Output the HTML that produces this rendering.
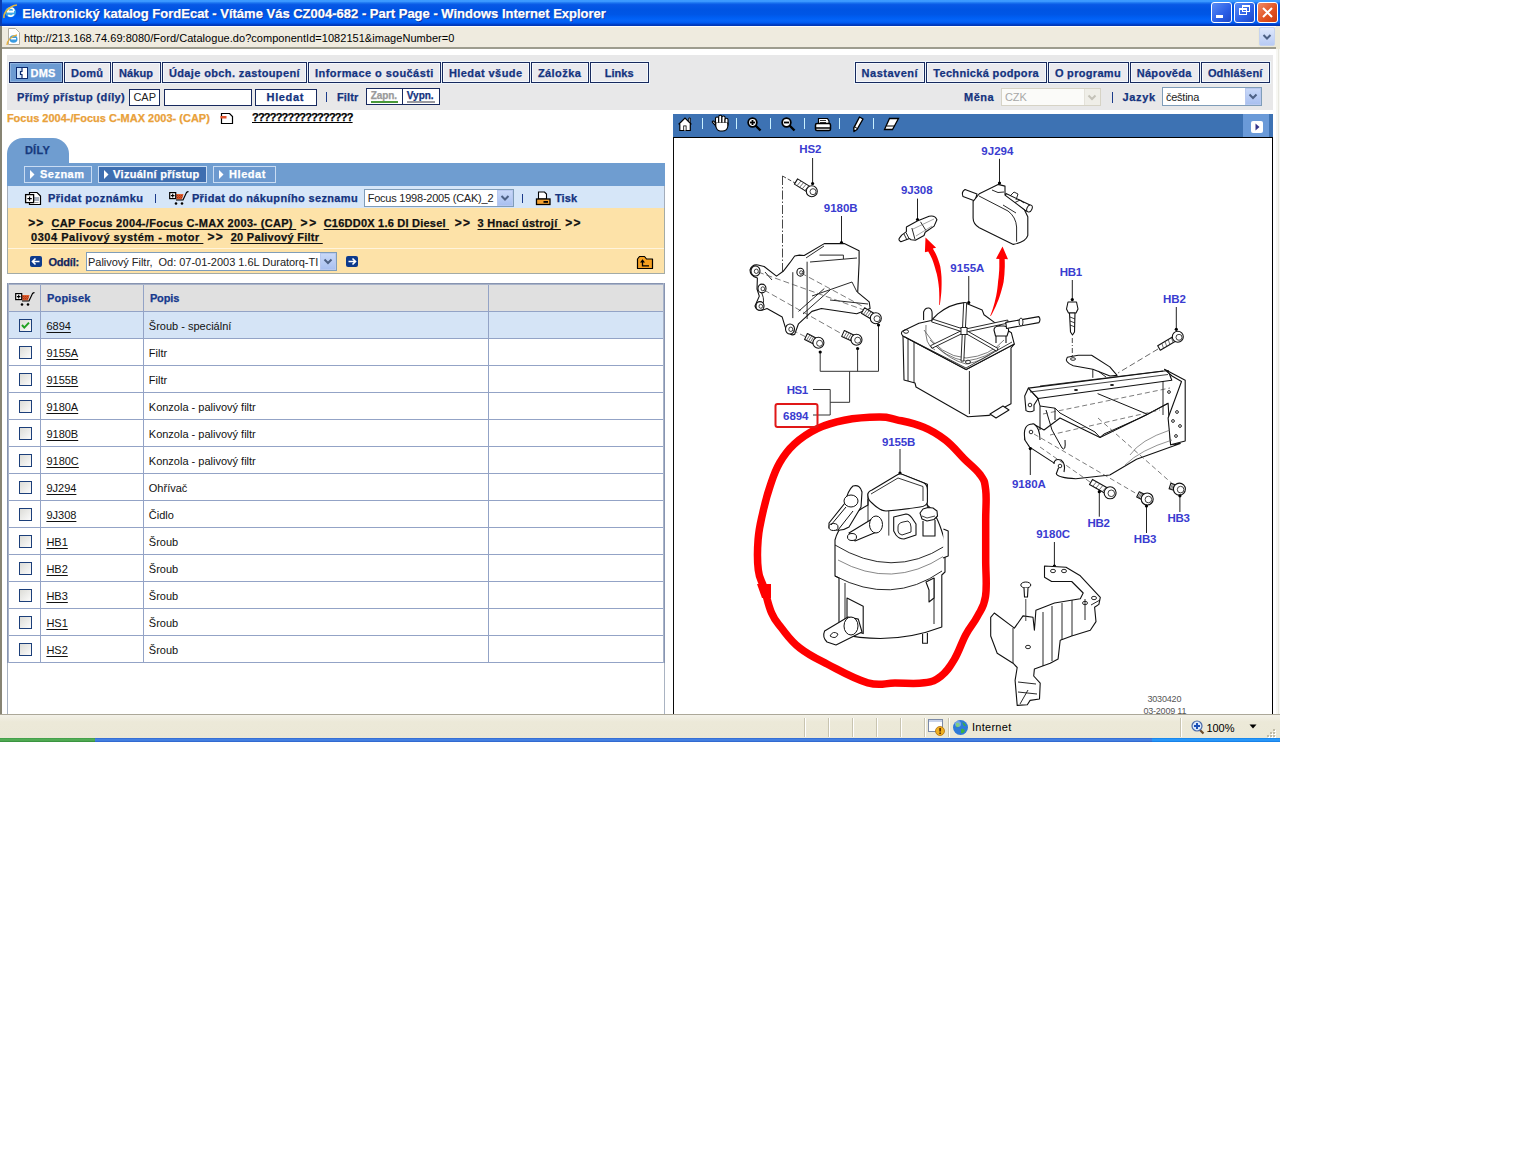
<!DOCTYPE html>
<html><head><meta charset="utf-8">
<style>
*{margin:0;padding:0;box-sizing:border-box}
html,body{width:1536px;height:1152px;background:#fff;overflow:hidden;font-family:"Liberation Sans",sans-serif}
.a{position:absolute}
.t{position:absolute;white-space:nowrap;line-height:1}
svg{position:absolute;overflow:hidden}
</style></head><body>
<div class="a" style="left:0px;top:0px;width:1280px;height:26px;background:linear-gradient(#3d9cff 0%,#3a96ff 6%,#1a74f0 11%,#0858e6 18%,#0054e3 35%,#0056e6 55%,#0060f5 70%,#0664f8 80%,#005af0 88%,#0040c8 94%,#0034b0 100%)"></div>
<div class="a" style="left:0px;top:0px;width:2px;height:26px;background:#0a3cb0"></div>
<svg style="left:2px;top:2px" width="16" height="17" viewBox="0 0 16 17"><ellipse cx="8.5" cy="10" rx="5.5" ry="5.3" fill="#3ca9ea"/><rect x="5" y="8.6" width="7" height="2" fill="#fff"/><path d="M6 9 a3 3 0 0 1 6 0" fill="none" stroke="#fff" stroke-width="1.6"/><path d="M11.7 12.3 a3.4 3.4 0 0 1 -5.5 0.8" fill="none" stroke="#fff" stroke-width="1.6"/><path d="M2 16 C1 11 7 4 15 3" fill="none" stroke="#e0b840" stroke-width="1.6"/></svg>
<div class="t" style="left:22.30px;top:7.00px;font-size:13px;color:#fff;font-weight:bold;-webkit-text-stroke:0.25px;text-shadow:1px 1px 0 #0b2f9a;">Elektronický katalog FordEcat - Vítáme Vás CZ004-682 - Part Page - Windows Internet Explorer</div>
<div class="a" style="left:1211px;top:2px;width:21px;height:21px;border:1px solid #fff;border-radius:3px;background:linear-gradient(135deg,#5a8cf5,#2a5ee6 60%,#1d48c8)"></div>
<div class="a" style="left:1234px;top:2px;width:21px;height:21px;border:1px solid #fff;border-radius:3px;background:linear-gradient(135deg,#5a8cf5,#2a5ee6 60%,#1d48c8)"></div>
<div class="a" style="left:1257px;top:2px;width:21px;height:21px;border:1px solid #fff;border-radius:3px;background:linear-gradient(135deg,#f08a66,#e0501e 60%,#c83c10)"></div>
<div class="a" style="left:1216px;top:15px;width:7px;height:3px;background:#fff"></div>
<div class="a" style="left:1239px;top:8px;width:8px;height:7px;border:1px solid #fff;border-top-width:2px"></div>
<div class="a" style="left:1242px;top:5px;width:8px;height:7px;border:1px solid #fff;border-top-width:2px"></div>
<svg style="left:1257px;top:2px" width="21" height="21" viewBox="0 0 21 21"><path d="M6 6 L15 15 M15 6 L6 15" stroke="#fff" stroke-width="2"/></svg>
<div class="a" style="left:0px;top:26px;width:1280px;height:23px;background:#ece9d8"></div>
<div class="a" style="left:2px;top:26px;width:1274px;height:1px;background:#fdfdfb"></div>
<div class="a" style="left:2px;top:27px;width:1256px;height:20px;background:#efebdf"></div>
<div class="a" style="left:0px;top:47px;width:1276px;height:2px;background:#9d9c8e"></div>
<div class="a" style="left:1259px;top:27px;width:16px;height:19px;background:linear-gradient(#dfe8fb,#b8cbf5);border:1px solid #c6d3ef;border-radius:2px"></div>
<svg style="left:1259px;top:27px" width="16" height="19" viewBox="0 0 16 19"><path d="M4.5 8 L8 11.5 L11.5 8" fill="none" stroke="#4d6185" stroke-width="2"/></svg>
<svg style="left:5px;top:28px" width="16" height="18" viewBox="0 0 16 18"><path d="M3.5 0.5 H10.5 L14.5 4.5 V16.5 H3.5 Z" fill="#fff" stroke="#b0aca0"/><ellipse cx="8.5" cy="11" rx="4" ry="3.8" fill="#3a9be0"/><rect x="6" y="10" width="5" height="1.5" fill="#fff"/><path d="M2 17 C2 13 6 8 12 7" fill="none" stroke="#e5b040" stroke-width="1.3"/></svg>
<div class="t" style="left:23.90px;top:32.69px;font-size:11px;color:#000;letter-spacing:0.039px;">http://213.168.74.69:8080/Ford/Catalogue.do?componentId=1082151&amp;imageNumber=0</div>
<div class="a" style="left:0px;top:26px;width:2px;height:716px;background:#878473"></div>
<div class="a" style="left:2px;top:49px;width:1274px;height:665px;background:#fff"></div>
<div class="a" style="left:1276px;top:49px;width:4px;height:665px;background:#f7f7f3"></div>
<div class="a" style="left:1278px;top:49px;width:1px;height:665px;background:#e8e8e0"></div>
<div class="a" style="left:7px;top:55px;width:1266px;height:55px;background:#e8e8e9"></div>
<div class="a" style="left:9px;top:62px;width:54px;height:21px;border:1px solid #17295e;background:#6c9bd2;box-shadow:inset 0 0 0 1px #8fb4e0,0 0 0 1px #eef5fb"></div>
<div class="t" style="left:30.60px;top:67.69px;font-size:11px;color:#fff;font-weight:bold;-webkit-text-stroke:0.25px;letter-spacing:0.142px;">DMS</div>
<svg style="left:16px;top:67px" width="12" height="12" viewBox="0 0 12 12"><rect x="0.5" y="0.5" width="11" height="11" fill="#fff" stroke="#0a2a70"/><rect x="1" y="1" width="4.5" height="10" fill="#cfe4fb"/><path d="M6 0.5 V4.5 H4.5 V7.5 H6 V11.5" fill="none" stroke="#0a2a70" stroke-width="1.2"/></svg>
<div class="a" style="left:64px;top:62px;width:47px;height:21px;border:1px solid #17295e;background:#eaeaee;box-shadow:inset 0 0 0 1px #f4f8fd,0 0 0 1px #eef5fb"></div>
<div class="t" style="left:71.00px;top:67.69px;font-size:11px;color:#14337e;font-weight:bold;-webkit-text-stroke:0.25px;letter-spacing:0.296px;">Domů</div>
<div class="a" style="left:112px;top:62px;width:49px;height:21px;border:1px solid #17295e;background:#eaeaee;box-shadow:inset 0 0 0 1px #f4f8fd,0 0 0 1px #eef5fb"></div>
<div class="t" style="left:118.90px;top:67.69px;font-size:11px;color:#14337e;font-weight:bold;-webkit-text-stroke:0.25px;letter-spacing:0.107px;">Nákup</div>
<div class="a" style="left:162px;top:62px;width:145px;height:21px;border:1px solid #17295e;background:#eaeaee;box-shadow:inset 0 0 0 1px #f4f8fd,0 0 0 1px #eef5fb"></div>
<div class="t" style="left:168.90px;top:67.69px;font-size:11px;color:#14337e;font-weight:bold;-webkit-text-stroke:0.25px;letter-spacing:0.374px;">Údaje obch. zastoupení</div>
<div class="a" style="left:308px;top:62px;width:133px;height:21px;border:1px solid #17295e;background:#eaeaee;box-shadow:inset 0 0 0 1px #f4f8fd,0 0 0 1px #eef5fb"></div>
<div class="t" style="left:315.00px;top:67.69px;font-size:11px;color:#14337e;font-weight:bold;-webkit-text-stroke:0.25px;letter-spacing:0.439px;">Informace o součásti</div>
<div class="a" style="left:442px;top:62px;width:88px;height:21px;border:1px solid #17295e;background:#eaeaee;box-shadow:inset 0 0 0 1px #f4f8fd,0 0 0 1px #eef5fb"></div>
<div class="t" style="left:448.90px;top:67.69px;font-size:11px;color:#14337e;font-weight:bold;-webkit-text-stroke:0.25px;letter-spacing:0.429px;">Hledat všude</div>
<div class="a" style="left:531px;top:62px;width:58px;height:21px;border:1px solid #17295e;background:#eaeaee;box-shadow:inset 0 0 0 1px #f4f8fd,0 0 0 1px #eef5fb"></div>
<div class="t" style="left:537.90px;top:67.69px;font-size:11px;color:#14337e;font-weight:bold;-webkit-text-stroke:0.25px;letter-spacing:0.439px;">Záložka</div>
<div class="a" style="left:590px;top:62px;width:59px;height:21px;border:1px solid #17295e;background:#eaeaee;box-shadow:inset 0 0 0 1px #f4f8fd,0 0 0 1px #eef5fb"></div>
<div class="t" style="left:604.80px;top:67.69px;font-size:11px;color:#14337e;font-weight:bold;-webkit-text-stroke:0.25px;letter-spacing:0.015px;">Links</div>
<div class="a" style="left:855px;top:62px;width:70px;height:21px;border:1px solid #17295e;background:#eaeaee;box-shadow:inset 0 0 0 1px #f4f8fd,0 0 0 1px #eef5fb"></div>
<div class="t" style="left:861.60px;top:67.69px;font-size:11px;color:#14337e;font-weight:bold;-webkit-text-stroke:0.25px;letter-spacing:0.509px;">Nastavení</div>
<div class="a" style="left:926px;top:62px;width:121px;height:21px;border:1px solid #17295e;background:#eaeaee;box-shadow:inset 0 0 0 1px #f4f8fd,0 0 0 1px #eef5fb"></div>
<div class="t" style="left:933.20px;top:67.69px;font-size:11px;color:#14337e;font-weight:bold;-webkit-text-stroke:0.25px;letter-spacing:0.337px;">Technická podpora</div>
<div class="a" style="left:1048px;top:62px;width:81px;height:21px;border:1px solid #17295e;background:#eaeaee;box-shadow:inset 0 0 0 1px #f4f8fd,0 0 0 1px #eef5fb"></div>
<div class="t" style="left:1054.90px;top:67.69px;font-size:11px;color:#14337e;font-weight:bold;-webkit-text-stroke:0.25px;letter-spacing:0.311px;">O programu</div>
<div class="a" style="left:1130px;top:62px;width:70px;height:21px;border:1px solid #17295e;background:#eaeaee;box-shadow:inset 0 0 0 1px #f4f8fd,0 0 0 1px #eef5fb"></div>
<div class="t" style="left:1136.70px;top:67.69px;font-size:11px;color:#14337e;font-weight:bold;-webkit-text-stroke:0.25px;letter-spacing:0.310px;">Nápověda</div>
<div class="a" style="left:1201px;top:62px;width:69px;height:21px;border:1px solid #17295e;background:#eaeaee;box-shadow:inset 0 0 0 1px #f4f8fd,0 0 0 1px #eef5fb"></div>
<div class="t" style="left:1207.90px;top:67.69px;font-size:11px;color:#14337e;font-weight:bold;-webkit-text-stroke:0.25px;letter-spacing:0.155px;">Odhlášení</div>
<div class="t" style="left:16.90px;top:92.19px;font-size:11px;color:#14337e;font-weight:bold;-webkit-text-stroke:0.25px;letter-spacing:0.403px;">Přímý přístup (díly)</div>
<div class="a" style="left:129px;top:89px;width:31px;height:17px;background:#fff;border:1px solid #17295e"></div>
<div class="t" style="left:133.40px;top:92.49px;font-size:11px;color:#222;">CAP</div>
<div class="a" style="left:164px;top:89px;width:88px;height:17px;background:#fff;border:1px solid #17295e"></div>
<div class="a" style="left:255px;top:89px;width:62px;height:17px;background:#fff;border:1px solid #17295e"></div>
<div class="t" style="left:266.60px;top:91.69px;font-size:11px;color:#14337e;font-weight:bold;-webkit-text-stroke:0.25px;letter-spacing:0.633px;">Hledat</div>
<div class="a" style="left:326px;top:92px;width:1px;height:10px;background:#1b3b8b"></div>
<div class="t" style="left:336.90px;top:92.49px;font-size:11px;color:#14337e;font-weight:bold;-webkit-text-stroke:0.25px;letter-spacing:0.161px;">Filtr</div>
<div class="a" style="left:366px;top:88px;width:74px;height:17px;background:#fff;border:1px solid #17295e"></div>
<div class="a" style="left:402px;top:88px;width:1px;height:17px;background:#17295e"></div>
<div class="t" style="left:370.70px;top:90.53px;font-size:10px;color:#9a9a9a;font-weight:bold;-webkit-text-stroke:0.25px;letter-spacing:-0.059px;">Zapn.</div>
<div class="a" style="left:371px;top:101px;width:27px;height:2px;background:#4a9a3a"></div>
<div class="t" style="left:406.80px;top:90.53px;font-size:10px;color:#14337e;font-weight:bold;-webkit-text-stroke:0.25px;letter-spacing:-0.012px;">Vypn.</div>
<div class="a" style="left:407px;top:101px;width:28px;height:2px;background:#9a9aa0"></div>
<div class="t" style="left:964.00px;top:92.29px;font-size:11px;color:#14337e;font-weight:bold;-webkit-text-stroke:0.25px;letter-spacing:0.480px;">Měna</div>
<div class="a" style="left:1001px;top:88px;width:100px;height:18px;background:#fbfbf9;border:1px solid #d6d3c6"></div>
<div class="a" style="left:1084px;top:89px;width:16px;height:16px;background:#efeee8;border-left:1px solid #e4e2da"></div>
<svg style="left:1084px;top:89px" width="16" height="16" viewBox="0 0 16 16"><path d="M4.5 6.5 L8 10 L11.5 6.5" fill="none" stroke="#c4c2b8" stroke-width="2"/></svg>
<div class="t" style="left:1004.90px;top:92.19px;font-size:11px;color:#a8a8a8;">CZK</div>
<div class="a" style="left:1112px;top:92px;width:1px;height:11px;background:#1b3b8b"></div>
<div class="t" style="left:1122.40px;top:92.49px;font-size:11px;color:#14337e;font-weight:bold;-webkit-text-stroke:0.25px;letter-spacing:0.673px;">Jazyk</div>
<div class="a" style="left:1162px;top:87px;width:100px;height:19px;background:#fff;border:1px solid #7f9db9"></div>
<div class="a" style="left:1245px;top:88px;width:16px;height:17px;background:linear-gradient(#c8d8f8,#a9c0f0);border:1px solid #b8c8ef"></div>
<svg style="left:1245px;top:88px" width="16" height="17" viewBox="0 0 16 17"><path d="M4.5 6.5 L8 10 L11.5 6.5" fill="none" stroke="#4d6185" stroke-width="2"/></svg>
<div class="t" style="left:1166.00px;top:92.19px;font-size:11px;color:#222;letter-spacing:-0.254px;">čeština</div>
<div class="t" style="left:6.90px;top:112.59px;font-size:11px;color:#e9a13a;font-weight:bold;-webkit-text-stroke:0.25px;">Focus 2004-/Focus C-MAX 2003- (CAP)</div>
<svg style="left:220px;top:113px" width="15" height="12" viewBox="0 0 15 12"><path d="M1.5 0.5 H9.5 L12.5 3.5 V10.5 H1.5 Z" fill="#fff" stroke="#000" stroke-width="1.2"/><rect x="0.5" y="3" width="6" height="2.5" fill="#e2522a"/></svg>
<div class="t" style="left:252.00px;top:112.19px;font-size:11px;color:#000;font-weight:bold;-webkit-text-stroke:0.25px;letter-spacing:-0.802px;text-decoration:underline;text-underline-offset:1px;">?????????????????</div>
<div class="a" style="left:7px;top:138px;width:62px;height:30px;background:#6f9dd0;border-radius:16px 16px 0 0"></div>
<div class="t" style="left:24.90px;top:145.39px;font-size:11px;color:#173a7e;font-weight:bold;-webkit-text-stroke:0.25px;letter-spacing:0.272px;">DÍLY</div>
<div class="a" style="left:7px;top:163px;width:658px;height:23px;background:#6f9dd0"></div>
<div class="a" style="left:24px;top:166px;width:68px;height:17px;border:1px solid #c9dcf3;background:#6c99cf"></div>
<svg style="left:30px;top:170px" width="5" height="9" viewBox="0 0 5 9"><path d="M0 0 L4.5 4.5 L0 9Z" fill="#fff"/></svg>
<div class="t" style="left:40.00px;top:169.09px;font-size:11px;color:#fff;font-weight:bold;-webkit-text-stroke:0.25px;letter-spacing:0.478px;">Seznam</div>
<div class="a" style="left:98px;top:166px;width:109px;height:17px;border:1px solid #c9dcf3;background:#3e6eb0"></div>
<svg style="left:104px;top:170px" width="5" height="9" viewBox="0 0 5 9"><path d="M0 0 L4.5 4.5 L0 9Z" fill="#fff"/></svg>
<div class="t" style="left:113.10px;top:169.09px;font-size:11px;color:#fff;font-weight:bold;-webkit-text-stroke:0.25px;letter-spacing:0.297px;">Vizuální přístup</div>
<div class="a" style="left:213px;top:166px;width:63px;height:17px;border:1px solid #c9dcf3;background:#6c99cf"></div>
<svg style="left:219px;top:170px" width="5" height="9" viewBox="0 0 5 9"><path d="M0 0 L4.5 4.5 L0 9Z" fill="#fff"/></svg>
<div class="t" style="left:229.10px;top:169.09px;font-size:11px;color:#fff;font-weight:bold;-webkit-text-stroke:0.25px;letter-spacing:0.524px;">Hledat</div>
<div class="a" style="left:7px;top:186px;width:658px;height:22px;background:#d6e6f8"></div>
<div class="a" style="left:7px;top:186px;width:1px;height:88px;background:#a3adbb"></div>
<div class="a" style="left:664px;top:186px;width:1px;height:88px;background:#a3adbb"></div>
<svg style="left:24px;top:191px" width="19" height="16" viewBox="0 0 19 16"><path d="M5.5 1.5 H13 L16.5 5 V13.5 H5.5Z" fill="#fff" stroke="#000" stroke-width="1.2"/><rect x="10" y="6" width="5" height="4" fill="#a8b0bc"/><rect x="10.5" y="11" width="4" height="1" fill="#a0a0a0"/><rect x="1.6" y="3.6" width="8" height="8" fill="#fff" stroke="#000" stroke-width="1.3"/><path d="M5.6 5.4 V9.8 M3.4 7.6 H7.8" stroke="#000" stroke-width="1.1"/></svg>
<div class="t" style="left:47.90px;top:193.39px;font-size:11px;color:#14337e;font-weight:bold;-webkit-text-stroke:0.25px;letter-spacing:0.460px;">Přidat poznámku</div>
<div class="a" style="left:155px;top:194px;width:1px;height:9px;background:#1b3b8b"></div>
<svg style="left:168px;top:190px" width="22" height="16" viewBox="0 0 22 16"><path d="M8 4 H15.5 L14 9.5 H8.5Z" fill="#e06030"/><path d="M9.5 5 V9 M11.5 5 V9 M13.5 5 V9 M8.3 6.2 H15 M8.5 8 H14.5" stroke="#8a1a00" stroke-width="0.7" stroke-dasharray="0.8 1.2"/><rect x="1.7" y="2.6" width="6" height="6" fill="#fff" stroke="#000" stroke-width="1.2"/><path d="M4.7 3.8 V7.4 M2.9 5.6 H6.5" stroke="#000" stroke-width="1.1"/><path d="M8 10 H15 L18.5 2.5 Q19.5 1.5 20.5 1.6" fill="none" stroke="#000" stroke-width="1.2"/><circle cx="8" cy="13.5" r="1.3" fill="#000"/><circle cx="14" cy="13.5" r="1.3" fill="#000"/></svg>
<div class="t" style="left:191.90px;top:193.39px;font-size:11px;color:#14337e;font-weight:bold;-webkit-text-stroke:0.25px;letter-spacing:0.360px;">Přidat do nákupního seznamu</div>
<div class="a" style="left:364px;top:189px;width:150px;height:18px;background:#fff;border:1px solid #7f9db9"></div>
<div class="a" style="left:497px;top:190px;width:16px;height:16px;background:linear-gradient(#c8d8f8,#a9c0f0);border:1px solid #b8c8ef"></div>
<svg style="left:497px;top:190px" width="16" height="16" viewBox="0 0 16 16"><path d="M4.5 6 L8 9.5 L11.5 6" fill="none" stroke="#4d6185" stroke-width="2"/></svg>
<div class="t" style="left:367.70px;top:192.69px;font-size:11px;color:#222;letter-spacing:-0.229px;">Focus 1998-2005 (CAK)_2</div>
<div class="a" style="left:522px;top:194px;width:1px;height:9px;background:#1b3b8b"></div>
<svg style="left:535px;top:190px" width="17" height="16" viewBox="0 0 17 16"><path d="M3.5 2 H9.5 L11.5 4 V9 H3.5Z" fill="#fff" stroke="#000" stroke-width="1.1"/><rect x="1.5" y="9" width="13.5" height="5.5" fill="#f2a030" stroke="#000" stroke-width="1.3"/><rect x="8.5" y="11" width="4.5" height="1.8" fill="#000"/></svg>
<div class="t" style="left:554.90px;top:193.39px;font-size:11px;color:#14337e;font-weight:bold;-webkit-text-stroke:0.25px;letter-spacing:0.139px;">Tisk</div>
<div class="a" style="left:7px;top:208px;width:658px;height:66px;background:#fde2a8;border:1px solid #a3aba6;border-top:none"></div>
<div class="a" style="left:8px;top:248px;width:656px;height:1px;background:#fff4dc"></div>
<div class="t" style="left:28.20px;top:217.24px;font-size:12px;color:#111;font-weight:bold;-webkit-text-stroke:0.25px;letter-spacing:0.990px;">&gt;&gt;</div>
<div class="t" style="left:51.40px;top:218.09px;font-size:11px;color:#111;font-weight:bold;-webkit-text-stroke:0.25px;letter-spacing:0.319px;text-decoration:underline;white-space:pre;text-underline-offset:1.5px;">CAP Focus 2004-/Focus C-MAX 2003- (CAP) </div>
<div class="t" style="left:300.40px;top:217.24px;font-size:12px;color:#111;font-weight:bold;-webkit-text-stroke:0.25px;letter-spacing:1.790px;">&gt;&gt;</div>
<div class="t" style="left:323.70px;top:218.09px;font-size:11px;color:#111;font-weight:bold;-webkit-text-stroke:0.25px;letter-spacing:0.226px;text-decoration:underline;white-space:pre;text-underline-offset:1.5px;">C16DD0X 1.6 DI Diesel </div>
<div class="t" style="left:454.70px;top:217.24px;font-size:12px;color:#111;font-weight:bold;-webkit-text-stroke:0.25px;letter-spacing:1.323px;">&gt;&gt;</div>
<div class="t" style="left:477.50px;top:218.09px;font-size:11px;color:#111;font-weight:bold;-webkit-text-stroke:0.25px;letter-spacing:0.280px;text-decoration:underline;white-space:pre;text-underline-offset:1.5px;">3 Hnací ústrojí </div>
<div class="t" style="left:565.20px;top:217.24px;font-size:12px;color:#111;font-weight:bold;-webkit-text-stroke:0.25px;letter-spacing:1.323px;">&gt;&gt;</div>
<div class="t" style="left:31.10px;top:232.09px;font-size:11px;color:#111;font-weight:bold;-webkit-text-stroke:0.25px;letter-spacing:0.522px;text-decoration:underline;white-space:pre;text-underline-offset:1.5px;">0304 Palivový systém - motor </div>
<div class="t" style="left:207.40px;top:231.24px;font-size:12px;color:#111;font-weight:bold;-webkit-text-stroke:0.25px;letter-spacing:1.323px;">&gt;&gt;</div>
<div class="t" style="left:230.70px;top:232.09px;font-size:11px;color:#111;font-weight:bold;-webkit-text-stroke:0.25px;letter-spacing:0.290px;text-decoration:underline;white-space:pre;text-underline-offset:1.5px;">20 Palivový Filtr </div>
<div class="a" style="left:30px;top:256px;width:12px;height:11px;background:#0d3a8c;border-radius:2px"></div>
<svg style="left:30px;top:256px" width="12" height="11" viewBox="0 0 12 11"><path d="M2.5 5.5 H9.5 M5.5 2.5 L2.5 5.5 L5.5 8.5" fill="none" stroke="#fff" stroke-width="1.6"/></svg>
<div class="t" style="left:48.50px;top:257.49px;font-size:11px;color:#12265e;font-weight:bold;-webkit-text-stroke:0.25px;letter-spacing:-0.213px;">Oddíl:</div>
<div class="a" style="left:86px;top:252px;width:251px;height:19px;background:#fff;border:1px solid #7f9db9"></div>
<div class="t" style="left:88.00px;top:256.69px;font-size:11px;color:#222;letter-spacing:-0.023px;white-space:pre;">Palivový Filtr,  Od: 07-01-2003 1.6L Duratorq-TI</div>
<div class="a" style="left:320px;top:253px;width:16px;height:17px;background:linear-gradient(#c8d8f8,#a9c0f0);border:1px solid #b8c8ef"></div>
<svg style="left:320px;top:253px" width="16" height="17" viewBox="0 0 16 17"><path d="M4.5 6.5 L8 10 L11.5 6.5" fill="none" stroke="#4d6185" stroke-width="2"/></svg>
<div class="a" style="left:346px;top:256px;width:12px;height:11px;background:#0d3a8c;border-radius:2px"></div>
<svg style="left:346px;top:256px" width="12" height="11" viewBox="0 0 12 11"><path d="M2.5 5.5 H9.5 M6.5 2.5 L9.5 5.5 L6.5 8.5" fill="none" stroke="#fff" stroke-width="1.6"/></svg>
<svg style="left:636px;top:255px" width="18" height="15" viewBox="0 0 18 15"><path d="M1.5 4 L3.5 1.5 H8.5 L10.5 4 H16.5 V13.5 H1.5Z" fill="#f5a020" stroke="#000" stroke-width="1.2" stroke-linejoin="round"/><path d="M6.5 6 V10.8 H13" fill="none" stroke="#000" stroke-width="1.3"/><path d="M4 7.5 L6.5 4.3 L9 7.5Z" fill="#000"/></svg>
<div class="a" style="left:7px;top:283px;width:1px;height:431px;background:#a9b3c2"></div>
<div class="a" style="left:664px;top:283px;width:1px;height:431px;background:#a9b3c2"></div>
<div class="a" style="left:9px;top:285px;width:654px;height:26px;background:#e0e0e0"></div>
<div class="a" style="left:9px;top:312px;width:654px;height:26px;background:#d5e4f6"></div>
<div class="a" style="left:7px;top:283px;width:658px;height:2px;background:#a8b3c9;border-top:1px solid #8794b0"></div>
<div class="a" style="left:7px;top:283px;width:2px;height:380px;background:#a8b3c9;border-left:1px solid #8794b0"></div>
<div class="a" style="left:663px;top:283px;width:2px;height:380px;background:#a8b3c9;border-right:1px solid #8794b0"></div>
<div class="a" style="left:9px;top:311px;width:654px;height:1px;background:#93a3c6"></div>
<div class="a" style="left:9px;top:338px;width:654px;height:1px;background:#93a3c6"></div>
<div class="a" style="left:9px;top:365px;width:654px;height:1px;background:#93a3c6"></div>
<div class="a" style="left:9px;top:392px;width:654px;height:1px;background:#93a3c6"></div>
<div class="a" style="left:9px;top:419px;width:654px;height:1px;background:#93a3c6"></div>
<div class="a" style="left:9px;top:446px;width:654px;height:1px;background:#93a3c6"></div>
<div class="a" style="left:9px;top:473px;width:654px;height:1px;background:#93a3c6"></div>
<div class="a" style="left:9px;top:500px;width:654px;height:1px;background:#93a3c6"></div>
<div class="a" style="left:9px;top:527px;width:654px;height:1px;background:#93a3c6"></div>
<div class="a" style="left:9px;top:554px;width:654px;height:1px;background:#93a3c6"></div>
<div class="a" style="left:9px;top:581px;width:654px;height:1px;background:#93a3c6"></div>
<div class="a" style="left:9px;top:608px;width:654px;height:1px;background:#93a3c6"></div>
<div class="a" style="left:9px;top:635px;width:654px;height:1px;background:#93a3c6"></div>
<div class="a" style="left:9px;top:662px;width:654px;height:1px;background:#93a3c6"></div>
<div class="a" style="left:40px;top:285px;width:1px;height:377px;background:#93a3c6"></div>
<div class="a" style="left:143px;top:285px;width:1px;height:377px;background:#93a3c6"></div>
<div class="a" style="left:488px;top:285px;width:1px;height:377px;background:#93a3c6"></div>
<svg style="left:14px;top:291px" width="22" height="16" viewBox="0 0 22 16"><path d="M8 4 H15.5 L14 9.5 H8.5Z" fill="#e06030"/><path d="M9.5 5 V9 M11.5 5 V9 M13.5 5 V9 M8.3 6.2 H15 M8.5 8 H14.5" stroke="#8a1a00" stroke-width="0.7" stroke-dasharray="0.8 1.2"/><rect x="1.7" y="2.6" width="6" height="6" fill="#fff" stroke="#000" stroke-width="1.2"/><path d="M4.7 3.8 V7.4 M2.9 5.6 H6.5" stroke="#000" stroke-width="1.1"/><path d="M8 10 H15 L18.5 2.5 Q19.5 1.5 20.5 1.6" fill="none" stroke="#000" stroke-width="1.2"/><circle cx="8" cy="13.5" r="1.3" fill="#000"/><circle cx="14" cy="13.5" r="1.3" fill="#000"/></svg>
<div class="t" style="left:46.90px;top:293.39px;font-size:11px;color:#173a8e;font-weight:bold;-webkit-text-stroke:0.25px;letter-spacing:0.218px;">Popisek</div>
<div class="t" style="left:149.90px;top:293.39px;font-size:11px;color:#173a8e;font-weight:bold;-webkit-text-stroke:0.25px;letter-spacing:-0.144px;">Popis</div>
<div class="a" style="left:19px;top:319px;width:13px;height:13px;border:1px solid #1c3f7a;background:linear-gradient(135deg,#dcdcd7,#fbfbfb)"></div>
<svg style="left:19px;top:319px" width="13" height="13" viewBox="0 0 13 13"><path d="M3 6 L5.3 8.6 L10 3.6" fill="none" stroke="#21a121" stroke-width="2"/></svg>
<div class="t" style="left:46.40px;top:320.69px;font-size:11px;color:#111;text-decoration:underline;text-underline-offset:1.5px;">6894</div>
<div class="t" style="left:148.80px;top:320.69px;font-size:11px;color:#111;">Šroub - speciální</div>
<div class="a" style="left:19px;top:346px;width:13px;height:13px;border:1px solid #1c3f7a;background:linear-gradient(135deg,#dcdcd7,#fbfbfb)"></div>
<div class="t" style="left:46.40px;top:347.69px;font-size:11px;color:#111;text-decoration:underline;text-underline-offset:1.5px;">9155A</div>
<div class="t" style="left:148.80px;top:347.69px;font-size:11px;color:#111;">Filtr</div>
<div class="a" style="left:19px;top:373px;width:13px;height:13px;border:1px solid #1c3f7a;background:linear-gradient(135deg,#dcdcd7,#fbfbfb)"></div>
<div class="t" style="left:46.40px;top:374.69px;font-size:11px;color:#111;text-decoration:underline;text-underline-offset:1.5px;">9155B</div>
<div class="t" style="left:148.80px;top:374.69px;font-size:11px;color:#111;">Filtr</div>
<div class="a" style="left:19px;top:400px;width:13px;height:13px;border:1px solid #1c3f7a;background:linear-gradient(135deg,#dcdcd7,#fbfbfb)"></div>
<div class="t" style="left:46.40px;top:401.69px;font-size:11px;color:#111;text-decoration:underline;text-underline-offset:1.5px;">9180A</div>
<div class="t" style="left:148.80px;top:401.69px;font-size:11px;color:#111;">Konzola - palivový filtr</div>
<div class="a" style="left:19px;top:427px;width:13px;height:13px;border:1px solid #1c3f7a;background:linear-gradient(135deg,#dcdcd7,#fbfbfb)"></div>
<div class="t" style="left:46.40px;top:428.69px;font-size:11px;color:#111;text-decoration:underline;text-underline-offset:1.5px;">9180B</div>
<div class="t" style="left:148.80px;top:428.69px;font-size:11px;color:#111;">Konzola - palivový filtr</div>
<div class="a" style="left:19px;top:454px;width:13px;height:13px;border:1px solid #1c3f7a;background:linear-gradient(135deg,#dcdcd7,#fbfbfb)"></div>
<div class="t" style="left:46.40px;top:455.69px;font-size:11px;color:#111;text-decoration:underline;text-underline-offset:1.5px;">9180C</div>
<div class="t" style="left:148.80px;top:455.69px;font-size:11px;color:#111;">Konzola - palivový filtr</div>
<div class="a" style="left:19px;top:481px;width:13px;height:13px;border:1px solid #1c3f7a;background:linear-gradient(135deg,#dcdcd7,#fbfbfb)"></div>
<div class="t" style="left:46.40px;top:482.69px;font-size:11px;color:#111;text-decoration:underline;text-underline-offset:1.5px;">9J294</div>
<div class="t" style="left:148.80px;top:482.69px;font-size:11px;color:#111;">Ohřívač</div>
<div class="a" style="left:19px;top:508px;width:13px;height:13px;border:1px solid #1c3f7a;background:linear-gradient(135deg,#dcdcd7,#fbfbfb)"></div>
<div class="t" style="left:46.40px;top:509.69px;font-size:11px;color:#111;text-decoration:underline;text-underline-offset:1.5px;">9J308</div>
<div class="t" style="left:148.80px;top:509.69px;font-size:11px;color:#111;">Čidlo</div>
<div class="a" style="left:19px;top:535px;width:13px;height:13px;border:1px solid #1c3f7a;background:linear-gradient(135deg,#dcdcd7,#fbfbfb)"></div>
<div class="t" style="left:46.40px;top:536.69px;font-size:11px;color:#111;text-decoration:underline;text-underline-offset:1.5px;">HB1</div>
<div class="t" style="left:148.80px;top:536.69px;font-size:11px;color:#111;">Šroub</div>
<div class="a" style="left:19px;top:562px;width:13px;height:13px;border:1px solid #1c3f7a;background:linear-gradient(135deg,#dcdcd7,#fbfbfb)"></div>
<div class="t" style="left:46.40px;top:563.69px;font-size:11px;color:#111;text-decoration:underline;text-underline-offset:1.5px;">HB2</div>
<div class="t" style="left:148.80px;top:563.69px;font-size:11px;color:#111;">Šroub</div>
<div class="a" style="left:19px;top:589px;width:13px;height:13px;border:1px solid #1c3f7a;background:linear-gradient(135deg,#dcdcd7,#fbfbfb)"></div>
<div class="t" style="left:46.40px;top:590.69px;font-size:11px;color:#111;text-decoration:underline;text-underline-offset:1.5px;">HB3</div>
<div class="t" style="left:148.80px;top:590.69px;font-size:11px;color:#111;">Šroub</div>
<div class="a" style="left:19px;top:616px;width:13px;height:13px;border:1px solid #1c3f7a;background:linear-gradient(135deg,#dcdcd7,#fbfbfb)"></div>
<div class="t" style="left:46.40px;top:617.69px;font-size:11px;color:#111;text-decoration:underline;text-underline-offset:1.5px;">HS1</div>
<div class="t" style="left:148.80px;top:617.69px;font-size:11px;color:#111;">Šroub</div>
<div class="a" style="left:19px;top:643px;width:13px;height:13px;border:1px solid #1c3f7a;background:linear-gradient(135deg,#dcdcd7,#fbfbfb)"></div>
<div class="t" style="left:46.40px;top:644.69px;font-size:11px;color:#111;text-decoration:underline;text-underline-offset:1.5px;">HS2</div>
<div class="t" style="left:148.80px;top:644.69px;font-size:11px;color:#111;">Šroub</div>
<div class="a" style="left:673px;top:114px;width:600px;height:23px;background:#3d72b3"></div>
<div class="a" style="left:1243px;top:114px;width:26px;height:23px;background:#6a9ad8"></div>
<div class="a" style="left:1251px;top:121px;width:12px;height:12px;background:#fff;border-radius:2px"></div>
<svg style="left:1251px;top:121px" width="12" height="12" viewBox="0 0 12 12"><path d="M4.5 2.5 L8.5 6 L4.5 9.5Z" fill="#35358a"/></svg>
<div class="a" style="left:702px;top:118px;width:1px;height:11px;background:#c8f0ff"></div>
<div class="a" style="left:736px;top:118px;width:1px;height:11px;background:#c8f0ff"></div>
<div class="a" style="left:770px;top:118px;width:1px;height:11px;background:#c8f0ff"></div>
<div class="a" style="left:804px;top:118px;width:1px;height:11px;background:#c8f0ff"></div>
<div class="a" style="left:839px;top:118px;width:1px;height:11px;background:#c8f0ff"></div>
<div class="a" style="left:873px;top:118px;width:1px;height:11px;background:#c8f0ff"></div>
<svg style="left:673px;top:114px" width="240" height="23" viewBox="673 114 240 23"><path d="M688.8 122 V118 H690.3 V123.5" fill="#fff" stroke="#000" stroke-width="0.9"/><path d="M679 124 L685 118 L691 124 L690.3 124.6 V130.5 H679.8 V124.6Z" fill="#fff" stroke="#000" stroke-width="1.2" stroke-linejoin="miter"/><rect x="683.3" y="125.5" width="3.2" height="5" fill="#000"/><rect x="684.1" y="126.3" width="1.6" height="4.2" fill="#fff"/><g fill="#fff" stroke="#000" stroke-width="1.1"><path d="M716 126 L712.5 122.5 Q711.8 120.8 713.5 121 L717 124Z"/><rect x="715.5" y="117" width="3.2" height="10" rx="1.6"/><rect x="718.7" y="115.3" width="3.2" height="11" rx="1.6"/><rect x="721.9" y="116" width="3.2" height="10" rx="1.6"/><rect x="725" y="118.3" width="3" height="8" rx="1.5"/><path d="M715.8 123 H727.8 V126.5 Q727 131 722.5 131 H720 Q716.5 130.5 715.8 126Z"/></g><path d="M716.6 123.6 H727" stroke="#fff" stroke-width="1.5"/><circle cx="752.5" cy="122.5" r="4.3" fill="#fff" stroke="#000" stroke-width="1.8"/><path d="M755.5 125.5 L760.5 130.5" stroke="#000" stroke-width="2.4"/><path d="M750.0 122.5 H755.0" stroke="#000" stroke-width="1.8"/><path d="M752.5 120 V125" stroke="#000" stroke-width="1.8"/><circle cx="786.5" cy="122.5" r="4.3" fill="#fff" stroke="#000" stroke-width="1.8"/><path d="M789.5 125.5 L794.5 130.5" stroke="#000" stroke-width="2.4"/><path d="M784.0 122.5 H789.0" stroke="#000" stroke-width="1.8"/><path d="M818.5 118.5 H827.5 L829 121 V124 H818.5Z" fill="#fff" stroke="#000" stroke-width="1.2"/><rect x="815.5" y="123.5" width="15" height="7" rx="1.5" fill="#fff" stroke="#000" stroke-width="1.5"/><path d="M816 128 H830" stroke="#000" stroke-width="1.5"/><path d="M820 120.5 H826 M820 122.5 H826" stroke="#000" stroke-width="0.8"/><path d="M859.5 117 L863 119 L857 129.5 L854 131.5 L853.8 127.8Z" fill="#fff" stroke="#000" stroke-width="1.4" stroke-linejoin="round"/><path d="M855 127 L858 129" stroke="#000" stroke-width="1"/><path d="M889.5 118.5 H898.5 L892.5 129.5 H884.5Z" fill="#fff" stroke="#000" stroke-width="1.3"/><path d="M886.5 126 H894.5" stroke="#000" stroke-width="1"/></svg>
<div class="a" style="left:673px;top:137px;width:600px;height:1px;background:#000"></div>
<div class="a" style="left:673px;top:137px;width:1px;height:577px;background:#0a0a0a"></div>
<div class="a" style="left:1272px;top:137px;width:1px;height:577px;background:#000"></div>
<div class="a" style="left:674px;top:138px;width:598px;height:576px;background:#fff"></div>
<svg style="left:674px;top:138px" width="598" height="576" viewBox="674 138 598 576"><path d="M782.5 176 V300" stroke="#333" stroke-width="0.9" stroke-dasharray="9 2 1.5 2"/><path d="M782.5 176 L795 183" stroke="#333" stroke-width="0.9" stroke-dasharray="4 2"/><path d="M794.4 184.1 L807.4 192.1 L810.6 186.9 L797.6 178.9Z" fill="#fff" stroke="#111" stroke-width="1.1" stroke-linejoin="round"/><path d="M797.0 185.7 L801.0 181.0" stroke="#333" stroke-width="0.7"/><path d="M799.6 187.3 L803.6 182.6" stroke="#333" stroke-width="0.7"/><path d="M802.2 188.9 L806.2 184.2" stroke="#333" stroke-width="0.7"/><path d="M804.8 190.5 L808.8 185.8" stroke="#333" stroke-width="0.7"/><circle cx="811.8" cy="191.2" r="5.5" fill="#fff" stroke="#111" stroke-width="1.1" stroke-linejoin="round"/><circle cx="813.0" cy="191.7" r="3.0" fill="none" stroke="#111" stroke-width="0.8"/><path d="M812.6 158 V183.5" stroke="#222" stroke-width="1"/><circle cx="812.6" cy="183.5" r="1.6" fill="#000"/><path d="M841.5 216 V242.5" stroke="#222" stroke-width="1"/><circle cx="841.5" cy="242.5" r="1.6" fill="#000"/><path d="M804.2 255.5 L824.3 243.6 H844.3 L859.1 250.8 V262.7 L857.7 292.3 L869.2 301.9 L870.1 308.5 L856.7 313.8 L821.4 308.5 L811.9 311.4 L798.5 323.8 L794.7 334.3 Q790 337 785.1 326.7 L782.2 317.1 L767 308.5 Q757 313 755 306 L759.3 296.1 L757 289 L757.4 278 Q750 276 750 270 Q752 264 758 265 L764.1 266.5 L776.5 276.1 L783.2 271.3 L789.9 262.7 L794.7 256 L799.4 255.1Z" fill="#fff" stroke="#111" stroke-width="1.1" stroke-linejoin="round"/><path d="M807.1 261.7 V319 M792.8 272.2 V318.1 M806.1 257.9 L824 246 M819.5 255.1 H843.4 V259 M810 262 L857 258 M798.5 311.4 L824.3 288.5 M803 314 L830 290 M812 296 L852 282 L857 292 M830 300 L868 304 M765 272 L772 280 M760 290 Q765 298 763 304" fill="none" stroke="#111" stroke-width="0.9"/><ellipse cx="755.5" cy="271" rx="4.5" ry="5.0" fill="#fff" stroke="#111" stroke-width="1.1" stroke-linejoin="round"/><ellipse cx="756.3" cy="271.3" rx="2.0" ry="2.2" fill="none" stroke="#111" stroke-width="0.8"/><ellipse cx="762" cy="288.5" rx="4" ry="4.4" fill="#fff" stroke="#111" stroke-width="1.1" stroke-linejoin="round"/><ellipse cx="762.8" cy="288.8" rx="1.8" ry="2.0" fill="none" stroke="#111" stroke-width="0.8"/><ellipse cx="760" cy="306" rx="4" ry="4.4" fill="#fff" stroke="#111" stroke-width="1.1" stroke-linejoin="round"/><ellipse cx="760.8" cy="306.3" rx="1.8" ry="2.0" fill="none" stroke="#111" stroke-width="0.8"/><ellipse cx="790" cy="329" rx="4.5" ry="5.0" fill="#fff" stroke="#111" stroke-width="1.1" stroke-linejoin="round"/><ellipse cx="790.8" cy="329.3" rx="2.0" ry="2.2" fill="none" stroke="#111" stroke-width="0.8"/><ellipse cx="800.4" cy="272.2" rx="3.5" ry="3.9" fill="#fff" stroke="#111" stroke-width="1.1" stroke-linejoin="round"/><ellipse cx="801.1999999999999" cy="272.5" rx="1.6" ry="1.8" fill="none" stroke="#111" stroke-width="0.8"/><path d="M758 272 L864 310 M764 290 L842 334 M792 330 L806 337 M801 273 L862 306" stroke="#444" stroke-width="0.7" stroke-dasharray="6 3"/><path d="M861.4 313.2 L871.4 319.2 L874.6 313.8 L864.6 307.8Z" fill="#fff" stroke="#111" stroke-width="1.1" stroke-linejoin="round"/><path d="M863.4 314.4 L867.2 309.3" stroke="#333" stroke-width="0.7"/><path d="M865.4 315.6 L869.2 310.5" stroke="#333" stroke-width="0.7"/><path d="M867.4 316.8 L871.2 311.7" stroke="#333" stroke-width="0.7"/><path d="M869.4 318.0 L873.2 312.9" stroke="#333" stroke-width="0.7"/><circle cx="875.8" cy="318.2" r="5.5" fill="#fff" stroke="#111" stroke-width="1.1" stroke-linejoin="round"/><circle cx="877.0" cy="318.7" r="3.0" fill="none" stroke="#111" stroke-width="0.8"/><path d="M841.7 336.4 L852.2 341.2 L854.8 335.4 L844.3 330.6Z" fill="#fff" stroke="#111" stroke-width="1.1" stroke-linejoin="round"/><path d="M843.8 337.4 L847.1 331.8" stroke="#333" stroke-width="0.7"/><path d="M845.9 338.3 L849.2 332.8" stroke="#333" stroke-width="0.7"/><path d="M848.0 339.3 L851.3 333.8" stroke="#333" stroke-width="0.7"/><path d="M850.1 340.3 L853.4 334.7" stroke="#333" stroke-width="0.7"/><circle cx="856.5" cy="339.7" r="5.5" fill="#fff" stroke="#111" stroke-width="1.1" stroke-linejoin="round"/><circle cx="857.7" cy="340.2" r="3.0" fill="none" stroke="#111" stroke-width="0.8"/><path d="M804.6 339.4 L814.1 344.2 L816.9 338.4 L807.4 333.6Z" fill="#fff" stroke="#111" stroke-width="1.1" stroke-linejoin="round"/><path d="M806.5 340.3 L809.9 334.9" stroke="#333" stroke-width="0.7"/><path d="M808.4 341.3 L811.8 335.9" stroke="#333" stroke-width="0.7"/><path d="M810.3 342.2 L813.7 336.8" stroke="#333" stroke-width="0.7"/><path d="M812.2 343.2 L815.6 337.8" stroke="#333" stroke-width="0.7"/><circle cx="818.4" cy="342.8" r="5.5" fill="#fff" stroke="#111" stroke-width="1.1" stroke-linejoin="round"/><circle cx="819.6" cy="343.3" r="3.0" fill="none" stroke="#111" stroke-width="0.8"/><path d="M878.5 325 V371.3 M857.6 348.5 V371.3 M820.2 352 V371.3 H878.5 M849.6 371.3 V402.3 H830.2 M813 389.5 H830.2 V415 H813" fill="none" stroke="#333" stroke-width="1"/><circle cx="878.5" cy="325" r="1.6" fill="#000"/><circle cx="857.6" cy="348.5" r="1.6" fill="#000"/><circle cx="820.2" cy="352" r="1.6" fill="#000"/><path d="M917.5 198.6 V219.5" stroke="#222" stroke-width="1"/><circle cx="917.5" cy="219.5" r="1.6" fill="#000"/><path d="M906.4 226.9 L917.3 221 L929.1 216.3 Q935 215 936.9 219.8 L934.1 226.1 L925.2 232.3 L924 235.5 L915.4 240.2 L911.1 239.8 L909.5 238.6 L900.9 241.7 Q898 240 899.4 238.2 L901.7 235.1 L906.4 231.6Z" fill="#fff" stroke="#111" stroke-width="1.1" stroke-linejoin="round"/><path d="M911.9 228 L915 239.4 M920.5 221.8 L925.9 230.4 M904 234 L907 240 M906 232.5 L909 238.5" fill="none" stroke="#111" stroke-width="0.9"/><path d="M913 229 L934 219 M916 236 L932 226" fill="none" stroke="#666" stroke-width="0.6"/><path d="M999.5 158.8 V183" stroke="#222" stroke-width="1"/><circle cx="999.5" cy="183" r="1.6" fill="#000"/><path d="M965 189.5 L977 194 L975 201 L963 196.5 Q961 192 965 189.5Z" fill="#fff" stroke="#111" stroke-width="1.1" stroke-linejoin="round"/><path d="M1006 193.5 L1030 205 L1027.5 211.5 L1004 200Z" fill="#fff" stroke="#111" stroke-width="1.1" stroke-linejoin="round"/><ellipse cx="1029.5" cy="208.5" rx="2.5" ry="3.7" transform="rotate(25 1029.5 208.5)" fill="#fff" stroke="#111" stroke-width="1"/><path d="M1010 196 L1014 192 L1018 194 L1016 200 M1012 204 L1020 200 L1024 203" fill="none" stroke="#111" stroke-width="0.9"/><path d="M973.1 201.4 L979.3 193.75 L998.1 184.4 L1005 186.1 V195.1 L1024.4 209.7 L1027.8 216.7 V235.4 Q1026 242 1013.3 244.4 L979.3 227.8 Q973.1 224 973.1 218Z" fill="#fff" stroke="#111" stroke-width="1.1" stroke-linejoin="round"/><path d="M979 196 L1008 211 Q1016 217 1016.6 227 V241.7 M992 190 Q998 194 1004 192 M1003 205 L1016 213" fill="none" stroke="#111" stroke-width="0.9"/><path d="M939.8 305.0 L940.4 300.7 L940.9 296.5 L941.3 292.4 L941.5 288.4 L941.6 284.5 L941.6 280.7 L941.5 277.0 L941.2 273.4 L940.8 269.9 L940.3 266.4 L939.4 263.2 L938.3 260.0 L937.2 257.0 L935.9 254.0 L934.4 251.2 L932.8 248.5 L936.1 247.8 L925.5 237.5 L924.9 252.2 L928.2 251.5 L929.6 253.9 L930.9 256.4 L932.1 259.1 L933.2 261.9 L934.1 264.8 L935.0 267.8 L935.9 270.9 L936.8 274.1 L937.5 277.5 L938.1 281.0 L938.6 284.7 L939.0 288.5 L939.2 292.4 L939.3 296.4 L939.3 300.6 L939.2 305.0Z" fill="#f00"/><path d="M990.8 316.1 L992.5 313.0 L994.1 309.7 L995.7 306.4 L997.1 303.1 L998.5 299.7 L999.7 296.3 L1000.8 292.8 L1001.8 289.2 L1002.8 285.6 L1003.6 281.9 L1004.0 278.2 L1004.4 274.4 L1004.6 270.6 L1004.8 266.7 L1004.8 262.8 L1004.7 258.9 L1008.0 259.2 L1002.5 246.5 L996.0 258.8 L999.3 259.1 L999.3 262.9 L999.3 266.6 L999.2 270.3 L998.9 274.0 L998.6 277.6 L998.1 281.2 L997.8 284.7 L997.4 288.3 L996.9 291.8 L996.3 295.3 L995.5 298.8 L994.7 302.3 L993.7 305.7 L992.7 309.1 L991.5 312.5 L990.2 315.9Z" fill="#f00"/><path d="M968.75 276 V302.5" stroke="#222" stroke-width="1"/><circle cx="968.75" cy="302.5" r="1.6" fill="#000"/><path d="M903 336 L904 380 L915 383 L916 387 L968 416.7 L989 415.4 L1011 403.7 V348 L1014.3 344.1 L966.1 369.6Z" fill="#fff" stroke="#111" stroke-width="1.1" stroke-linejoin="round"/><path d="M969.4 371 V414 M908 338 V381 M914 341 V383" fill="none" stroke="#111" stroke-width="0.9"/><path d="M990 414 L1003 406 L1009 410 L996 418Z" fill="#fff" stroke="#111" stroke-width="1.1" stroke-linejoin="round"/><path d="M902.8 330.9 L918.9 323.3 L931.2 320.5 L937.8 313.9 Q950 304 964.2 302.6 L982.2 310.1 L984 314.8 L994.4 322.4 L1011.4 332.8 L1014.3 344.1 L966.1 369.6 L903 336 Q900 333 902.8 330.9Z" fill="#fff" stroke="#111" stroke-width="1.1" stroke-linejoin="round"/><path d="M905 337 L966 368 L1012 342" fill="none" stroke="#111" stroke-width="0.8"/><ellipse cx="906" cy="331.5" rx="2.5" ry="1.8" fill="none" stroke="#111" stroke-width="0.9"/><ellipse cx="968" cy="362" rx="2.5" ry="1.8" fill="none" stroke="#111" stroke-width="0.9"/><path d="M924 330 Q940 356 966 358 Q990 356 1004 340 M930 340 Q945 358 966 361 Q988 358 1000 346 M936 346 Q950 360 966 364 Q984 361 996 350" fill="none" stroke="#444" stroke-width="0.7"/><path d="M926 325 Q924 345 935 350" fill="none" stroke="#444" stroke-width="0.7"/><path d="M931.9 348.3 L964.9 332.2 L963.5 329.6 L930.5 345.7Z" fill="#fff" stroke="#111" stroke-width="0.9"/><path d="M931.6 321.9 L963.7 332.3 L964.7 329.5 L932.6 319.1Z" fill="#fff" stroke="#111" stroke-width="0.9"/><path d="M964.5 332.4 L1008.3 323.0 L1007.7 320.0 L963.9 329.4Z" fill="#fff" stroke="#111" stroke-width="0.9"/><path d="M963.5 332.2 L996.6 351.1 L998.0 348.5 L964.9 329.6Z" fill="#fff" stroke="#111" stroke-width="0.9"/><path d="M963.7 302.6 L966.7 302.6 L963.8 361.1 L961 361.1Z" fill="#fff" stroke="#111" stroke-width="0.9"/><rect x="961" y="327.5" width="6" height="7" fill="#fff" stroke="#111" stroke-width="0.9"/><path d="M923.6 320 V312 Q925 307.5 929 308 Q932 309 932.1 313 V319" fill="#fff" stroke="#111" stroke-width="1.1" stroke-linejoin="round"/><path d="M994 330 Q994 326 1000 326 H1004 Q1009 327 1008.6 331 L1007 336 H995.5Z M996 336 V343 M1006 336 V343" fill="#fff" stroke="#111" stroke-width="1.1" stroke-linejoin="round"/><path d="M1005.8 322.4 L1038.8 316.6 Q1041 319 1039 322.6 L1006.5 328.5Z" fill="#fff" stroke="#111" stroke-width="1.1" stroke-linejoin="round"/><ellipse cx="1021" cy="322" rx="2" ry="4" fill="#fff" stroke="#111" stroke-width="0.9"/><path d="M1072.3 280 V299.6" stroke="#222" stroke-width="1"/><circle cx="1072.3" cy="299.6" r="1.6" fill="#000"/><path d="M1068 302 H1076.5 L1078 309 L1076 313 H1068.5 L1066.5 309Z" fill="#fff" stroke="#111" stroke-width="1.1" stroke-linejoin="round"/><path d="M1069.5 313 L1070.5 332 L1072.5 335 L1074.5 332 L1075 313Z" fill="#fff" stroke="#111" stroke-width="1.1" stroke-linejoin="round"/><path d="M1070 317 L1075 319 M1070 321 L1075 323 M1070 325 L1075 327" stroke="#111" stroke-width="0.8"/><path d="M1072.3 338 V358" stroke="#333" stroke-width="0.9" stroke-dasharray="5 2 1 2"/><path d="M1176.3 307 V329.3" stroke="#222" stroke-width="1"/><circle cx="1176.3" cy="329.3" r="1.6" fill="#000"/><path d="M1160.3 350.2 L1176.3 340.7 L1173.7 336.3 L1157.7 345.8Z" fill="#fff" stroke="#111" stroke-width="1.1" stroke-linejoin="round"/><path d="M1163.5 348.3 L1161.8 343.3" stroke="#333" stroke-width="0.7"/><path d="M1166.7 346.4 L1165.0 341.4" stroke="#333" stroke-width="0.7"/><path d="M1169.9 344.5 L1168.2 339.5" stroke="#333" stroke-width="0.7"/><path d="M1173.1 342.6 L1171.4 337.6" stroke="#333" stroke-width="0.7"/><circle cx="1177.8" cy="336.8" r="5.5" fill="#fff" stroke="#111" stroke-width="1.1" stroke-linejoin="round"/><circle cx="1179.0" cy="337.3" r="3.0" fill="none" stroke="#111" stroke-width="0.8"/><path d="M1158 349 L1118 373" stroke="#444" stroke-width="0.8" stroke-dasharray="6 3"/><path d="M1024.7 439.8 Q1024 426 1033.2 424 L1044 430 L1060 418 L1100 437.4 L1147.5 414.3 L1168.1 403.3 L1170.6 444.7 L1180.3 443.4 L1136.5 459.2 L1109.8 475 L1075.8 478.7 Q1058 478 1056.3 473.8 L1061.2 460.5 L1053.9 462.9 L1029.6 447.1Z" fill="#fff" stroke="#111" stroke-width="1.1" stroke-linejoin="round"/><path d="M1038 398.5 L1040 406 L1055.1 408.2 L1060 413 L1095 432 L1100 437.4 L1104 434 L1140 418 L1147.5 414.3 L1168.1 403.3 M1097.6 393.6 L1147.5 414.3 M1055 408 V420 M1040 406 V430 M1046 410 L1052 430 L1062 448 Q1066 452 1065 440" fill="none" stroke="#111" stroke-width="1"/><path d="M1024.7 396 L1028.4 388.1 L1038.1 398.5 L1034 405 V410.6 Q1030 413 1026 410.6Z" fill="#fff" stroke="#111" stroke-width="1.1" stroke-linejoin="round"/><circle cx="1030" cy="405" r="1.8" fill="none" stroke="#111" stroke-width="0.9"/><path d="M1028.4 388.1 L1168.1 370.5 L1171.8 380.2 L1038.1 398.5Z" fill="#fff" stroke="#111" stroke-width="1.1" stroke-linejoin="round"/><path d="M1030 392 L1168 374.5 M1040 386 L1163 371" fill="none" stroke="#111" stroke-width="0.8"/><ellipse cx="1076" cy="390" rx="2" ry="1" fill="#111"/><ellipse cx="1112" cy="385" rx="2" ry="1" fill="#111"/><path d="M1067.3 357.2 L1078.2 355.3 H1091.6 L1109.8 366.9 L1117.1 375.4 L1110 376 L1092.8 369.3 L1073.3 365.7 Q1064 362 1067.3 357.2Z" fill="#fff" stroke="#111" stroke-width="1.1" stroke-linejoin="round"/><path d="M1092.8 369.3 V377.8 M1098 371 L1106 377" fill="none" stroke="#111" stroke-width="0.9"/><ellipse cx="1073" cy="359" rx="2.5" ry="1.3" fill="none" stroke="#111" stroke-width="0.9"/><path d="M1164.5 369.3 L1185.2 380.2 V441 L1170.6 444.7 L1168.1 418 L1181.5 381.5 L1172 376Z" fill="#fff" stroke="#111" stroke-width="1.1" stroke-linejoin="round"/><path d="M1163 381 V415" fill="none" stroke="#111" stroke-width="0.9"/><circle cx="1177" cy="412" r="1.4" fill="none" stroke="#111" stroke-width="0.9"/><circle cx="1173" cy="421" r="1.4" fill="none" stroke="#111" stroke-width="0.9"/><circle cx="1180" cy="426" r="1.4" fill="none" stroke="#111" stroke-width="0.9"/><circle cx="1176" cy="436" r="1.4" fill="none" stroke="#111" stroke-width="0.9"/><circle cx="1169" cy="392" r="1.4" fill="none" stroke="#111" stroke-width="0.9"/><path d="M1025 440 Q1022 423 1034 424 Q1040 428 1040 440" fill="#fff" stroke="#111" stroke-width="1.1" stroke-linejoin="round"/><path d="M1054 464 Q1054 458 1061 460 Q1066 464 1064 472" fill="#fff" stroke="#111" stroke-width="1.1" stroke-linejoin="round"/><circle cx="1031" cy="432" r="1.8" fill="none" stroke="#111" stroke-width="0.9"/><circle cx="1060" cy="466" r="1.8" fill="none" stroke="#111" stroke-width="0.9"/><path d="M1043 414 L1170 388 M1050 435 L1160 410 M1034 434 L1137 494 M1040 447 L1090 482 M1098 418 L1176 487" fill="none" stroke="#444" stroke-width="0.7" stroke-dasharray="5 3"/><path d="M1130 455 Q1140 440 1170 430 M1125 465 Q1140 450 1172 440" fill="none" stroke="#666" stroke-width="0.7"/><path d="M1030.3 475 V448.6" stroke="#222" stroke-width="1"/><circle cx="1030.3" cy="448.6" r="1.6" fill="#000"/><path d="M1089.5 484.6 L1105.5 493.6 L1108.5 488.4 L1092.5 479.4Z" fill="#fff" stroke="#111" stroke-width="1.1" stroke-linejoin="round"/><path d="M1092.7 486.4 L1096.6 481.7" stroke="#333" stroke-width="0.7"/><path d="M1095.9 488.2 L1099.8 483.5" stroke="#333" stroke-width="0.7"/><path d="M1099.1 490.0 L1103.0 485.3" stroke="#333" stroke-width="0.7"/><path d="M1102.3 491.8 L1106.2 487.1" stroke="#333" stroke-width="0.7"/><circle cx="1110.1" cy="492.8" r="6" fill="#fff" stroke="#111" stroke-width="1.1" stroke-linejoin="round"/><circle cx="1111.3" cy="493.3" r="3.3" fill="none" stroke="#111" stroke-width="0.8"/><path d="M1136.7 497.1 L1142.7 500.1 L1145.3 494.7 L1139.3 491.7Z" fill="#fff" stroke="#111" stroke-width="1.1" stroke-linejoin="round"/><path d="M1137.9 497.7 L1140.9 492.5" stroke="#333" stroke-width="0.7"/><path d="M1139.1 498.3 L1142.1 493.1" stroke="#333" stroke-width="0.7"/><path d="M1140.3 498.9 L1143.3 493.7" stroke="#333" stroke-width="0.7"/><path d="M1141.5 499.5 L1144.5 494.3" stroke="#333" stroke-width="0.7"/><circle cx="1147.2" cy="499.0" r="6" fill="#fff" stroke="#111" stroke-width="1.1" stroke-linejoin="round"/><circle cx="1148.4" cy="499.5" r="3.3" fill="none" stroke="#111" stroke-width="0.8"/><path d="M1169.1 488.8 L1175.1 490.8 L1176.9 485.2 L1170.9 483.2Z" fill="#fff" stroke="#111" stroke-width="1.1" stroke-linejoin="round"/><path d="M1170.3 489.2 L1172.5 483.7" stroke="#333" stroke-width="0.7"/><path d="M1171.5 489.6 L1173.7 484.1" stroke="#333" stroke-width="0.7"/><path d="M1172.7 490.0 L1174.9 484.5" stroke="#333" stroke-width="0.7"/><path d="M1173.9 490.4 L1176.1 484.9" stroke="#333" stroke-width="0.7"/><circle cx="1179.4" cy="489.1" r="6" fill="#fff" stroke="#111" stroke-width="1.1" stroke-linejoin="round"/><circle cx="1180.6" cy="489.6" r="3.3" fill="none" stroke="#111" stroke-width="0.8"/><path d="M1099.3 516.7 V491.7" stroke="#222" stroke-width="1"/><circle cx="1099.3" cy="491.7" r="1.6" fill="#000"/><path d="M1146.5 533 V506" stroke="#222" stroke-width="1"/><circle cx="1146.5" cy="506" r="1.6" fill="#000"/><path d="M1179.9 512 V495.8" stroke="#222" stroke-width="1"/><circle cx="1179.9" cy="495.8" r="1.6" fill="#000"/><path d="M1054.4 542 V566" stroke="#222" stroke-width="1"/><circle cx="1054.4" cy="566" r="1.6" fill="#000"/><path d="M1044.5 566 L1066 567.2 L1080.3 575.8 L1100.3 597.3 L1098.9 604.4 L1094.6 607.3 L1096 621.6 L1090.3 630.2 L1071.7 636 L1060.2 640.3 L1058.1 658.9 L1050.2 663.2 L1034.4 668.9 L1033.7 676 L1040.2 683.2 L1039.5 699 L1030.1 700.4 L1027.3 704.7 L1017.2 705.4 L1015.1 680.4 L1017.2 667.5 L1013 663.2 L997.2 653.2 L990.7 636 L990.7 617.3 L994.3 613 L1014.4 628.1 L1023 615.9 L1033 617.3 L1034.4 630.2 L1035.9 610.2 L1054.5 603 L1080.3 598.7 L1083.2 593 L1071.7 581.5 L1051.6 581.5 L1044.5 577.2Z" fill="#fff" stroke="#111" stroke-width="1.1" stroke-linejoin="round"/><path d="M1013 628 V663 M1043 612 V666 M1052 606 V661 M1062 603 V640 M1072 600 V636 M1085 599 V620 M1091 605 L1100 600 M1018 682 L1036 684 M1018 692 L1037 694 M1020 704 L1028 690" fill="none" stroke="#111" stroke-width="0.9"/><ellipse cx="1053" cy="571" rx="2.5" ry="1.7" fill="none" stroke="#111" stroke-width="0.9"/><ellipse cx="1064" cy="571" rx="2.5" ry="1.7" fill="none" stroke="#111" stroke-width="0.9"/><ellipse cx="1094" cy="598" rx="2.5" ry="1.7" fill="none" stroke="#111" stroke-width="0.9"/><ellipse cx="1085" cy="603" rx="2.5" ry="1.7" fill="none" stroke="#111" stroke-width="0.9"/><ellipse cx="1028" cy="647" rx="2.5" ry="1.7" fill="none" stroke="#111" stroke-width="0.9"/><ellipse cx="1025.8" cy="585" rx="5" ry="3" fill="#fff" stroke="#111" stroke-width="1"/><path d="M1024 588 L1024.5 597 H1027.5 L1028 588" fill="#fff" stroke="#111" stroke-width="1.1" stroke-linejoin="round"/><path d="M1025.8 599 V621" stroke="#333" stroke-width="0.9"/><path d="M900 449 V473" stroke="#222" stroke-width="1"/><circle cx="900" cy="473" r="1.6" fill="#000"/><path d="M835 540 V576 L839 578 V633.6 Q892 646 941.8 627 V575 L945 572 V542 Q937 512 927 505 L927.4 484.3 L900.1 473.8 L868 493.9 V505 Q840 520 835 540Z" fill="#fff" stroke="#111" stroke-width="1.1" stroke-linejoin="round"/><path d="M835 545 Q892 580 945 546 M835 576 Q892 606 942 571 M845 583 V630 M934 578 V624" fill="none" stroke="#111" stroke-width="0.9"/><path d="M838 560 Q892 590 944 556" fill="none" stroke="#555" stroke-width="0.7"/><path d="M868 496 Q867 492 872 490 L897 475 Q900 473 904 475 L924 483 Q927.4 485 927.4 490 V502 Q927 506 920 507 Q900 510 886 511 Q880 511 872 503 Q868 500 868 496Z" fill="#fff" stroke="#111" stroke-width="1.1" stroke-linejoin="round"/><path d="M871 494 L898 478 L923 486.5 V501 M868 499 V526 M888.8 511 V535.6 M927.4 504 V520" fill="none" stroke="#111" stroke-width="0.85"/><path d="M829 523 L845 503 Q848 490 853 486 Q860 484 862 492 L861 507 L849 527 Q840 533 829 528Z" fill="#fff" stroke="#111" stroke-width="1.1" stroke-linejoin="round"/><ellipse cx="851" cy="501" rx="7" ry="6" fill="#fff" stroke="#111" stroke-width="1"/><ellipse cx="833.5" cy="527" rx="4.5" ry="3.5" fill="#fff" stroke="#111" stroke-width="1"/><path d="M831 525 L846 507 M838 530 L853 511" fill="none" stroke="#111" stroke-width="1"/><path d="M849 533 L872 519 L879 531 L855 541Z" fill="#fff" stroke="#111" stroke-width="1.1" stroke-linejoin="round"/><ellipse cx="876" cy="524.5" rx="6.5" ry="8.5" fill="#fff" stroke="#111" stroke-width="1"/><ellipse cx="852" cy="537" rx="4.5" ry="3.5" fill="#fff" stroke="#111" stroke-width="1"/><path d="M893.7 517 L906 514 Q909 514 912 518 L916 524 V535 L904 539 Q899 539 896 535 L893.7 531Z" fill="#fff" stroke="#111" stroke-width="1.1" stroke-linejoin="round"/><path d="M898 527 Q898 523 903 522 L908 521 Q911 523 911 527 V532 L902 535 Q898 534 898 531Z" fill="none" stroke="#111" stroke-width="0.9"/><path d="M923 521 V536 H935 V520" fill="#fff" stroke="#111" stroke-width="1.1" stroke-linejoin="round"/><path d="M920 513 L923 509 L928 507.5 L933 508 L937 511 L937.5 516 L934 519.5 L927 521 L922 519 Z" fill="#fff" stroke="#111" stroke-width="1.1" stroke-linejoin="round"/><path d="M922 516 L927 518 L935 516" fill="none" stroke="#111" stroke-width="0.8"/><path d="M943.4 529 L948.2 531 V556 L943 558" fill="#fff" stroke="#111" stroke-width="1.1" stroke-linejoin="round"/><path d="M926 582 L934 578 V598 L929 602 V590Z" fill="#fff" stroke="#111" stroke-width="1.1" stroke-linejoin="round"/><path d="M847 598 L863.2 606.3 V633.6 L847 628Z" fill="#fff" stroke="#111" stroke-width="1.1" stroke-linejoin="round"/><path d="M824.6 631 L848 617 L858.3 619.1 L862 632 L836 645 L827 642 Q822 637 824.6 631Z" fill="#fff" stroke="#111" stroke-width="1.1" stroke-linejoin="round"/><ellipse cx="851" cy="626" rx="7" ry="9" fill="#fff" stroke="#111" stroke-width="1"/><path d="M830 636 Q833 630 838 634 Q836 640 830 636Z" fill="none" stroke="#111" stroke-width="0.9"/><path d="M922.6 634 V643.2 H927.4 V633" fill="#fff" stroke="#111" stroke-width="1.1" stroke-linejoin="round"/><path d="M879.2 417.1 C889.7 417.0 888.0 417.8 896.9 419.8 C905.8 421.8 914.1 423.2 923.8 427.2 C933.5 431.2 937.3 433.7 945.4 440.0 C953.5 446.3 957.2 451.8 964.2 458.8 C971.2 465.8 976.1 468.8 980.4 475.0 C984.7 481.2 984.6 481.0 985.7 490.0 C986.8 499.0 985.7 506.0 985.7 520.0 C985.7 534.0 985.7 544.5 985.7 559.8 C985.7 575.1 987.2 585.2 985.5 596.5 C983.8 607.8 981.3 608.8 977.4 616.4 C973.5 624.0 970.4 626.1 965.8 634.7 C961.2 643.3 959.2 651.3 954.2 659.6 C949.2 667.9 946.9 671.6 940.9 676.2 C934.9 680.8 933.5 681.4 924.3 682.8 C915.1 684.2 906.3 683.0 895.0 683.0 C883.7 683.0 881.2 686.5 867.8 682.8 C854.4 679.1 841.6 671.5 828.0 664.5 C814.4 657.5 809.1 655.3 799.8 648.0 C790.5 640.7 787.1 635.0 781.5 628.0 C775.9 621.0 775.1 621.0 771.6 613.0 C768.1 605.0 766.8 596.8 764.1 588.2 C761.4 579.6 759.5 579.7 758.3 570.0 C757.1 560.3 757.2 551.1 758.1 539.6 C759.0 528.1 760.4 523.5 762.8 512.7 C765.2 501.9 766.8 495.8 770.2 485.8 C773.6 475.8 774.8 471.3 779.6 462.9 C784.4 454.5 786.9 450.9 794.4 444.0 C801.9 437.1 807.3 433.4 817.3 428.6 C827.3 423.8 831.8 422.5 844.2 420.2 C856.6 417.9 868.7 417.2 879.2 417.1Z" fill="none" stroke="#ff0000" stroke-width="7.5" stroke-linejoin="round"/><path d="M757 584 H771 V598 H762Z" fill="#ff0000"/><rect x="775.5" y="404" width="42" height="23" rx="2" fill="none" stroke="#e01818" stroke-width="2"/></svg>
<div class="t" style="left:799.30px;top:144.37px;font-size:11.5px;color:#3a3cd0;font-weight:bold;-webkit-text-stroke:0.25px;letter-spacing:-0.189px;-webkit-text-stroke:0;">HS2</div>
<div class="t" style="left:823.80px;top:203.47px;font-size:11.5px;color:#3a3cd0;font-weight:bold;-webkit-text-stroke:0.25px;letter-spacing:-0.020px;-webkit-text-stroke:0;">9180B</div>
<div class="t" style="left:901.00px;top:185.37px;font-size:11.5px;color:#3a3cd0;font-weight:bold;-webkit-text-stroke:0.25px;letter-spacing:-0.107px;-webkit-text-stroke:0;">9J308</div>
<div class="t" style="left:981.30px;top:146.27px;font-size:11.5px;color:#3a3cd0;font-weight:bold;-webkit-text-stroke:0.25px;letter-spacing:0.027px;-webkit-text-stroke:0;">9J294</div>
<div class="t" style="left:950.30px;top:263.27px;font-size:11.5px;color:#3a3cd0;font-weight:bold;-webkit-text-stroke:0.25px;letter-spacing:0.047px;-webkit-text-stroke:0;">9155A</div>
<div class="t" style="left:1059.70px;top:267.17px;font-size:11.5px;color:#3a3cd0;font-weight:bold;-webkit-text-stroke:0.25px;letter-spacing:-0.283px;-webkit-text-stroke:0;">HB1</div>
<div class="t" style="left:1163.10px;top:294.17px;font-size:11.5px;color:#3a3cd0;font-weight:bold;-webkit-text-stroke:0.25px;letter-spacing:-0.083px;-webkit-text-stroke:0;">HB2</div>
<div class="t" style="left:786.80px;top:384.97px;font-size:11.5px;color:#3a3cd0;font-weight:bold;-webkit-text-stroke:0.25px;letter-spacing:-0.549px;-webkit-text-stroke:0;">HS1</div>
<div class="t" style="left:783.10px;top:410.57px;font-size:11.5px;color:#3a3cd0;font-weight:bold;-webkit-text-stroke:0.25px;letter-spacing:-0.110px;-webkit-text-stroke:0;">6894</div>
<div class="t" style="left:882.10px;top:436.57px;font-size:11.5px;color:#3a3cd0;font-weight:bold;-webkit-text-stroke:0.25px;letter-spacing:-0.175px;-webkit-text-stroke:0;">9155B</div>
<div class="t" style="left:1011.90px;top:479.17px;font-size:11.5px;color:#3a3cd0;font-weight:bold;-webkit-text-stroke:0.25px;letter-spacing:0.025px;-webkit-text-stroke:0;">9180A</div>
<div class="t" style="left:1087.60px;top:517.67px;font-size:11.5px;color:#3a3cd0;font-weight:bold;-webkit-text-stroke:0.25px;letter-spacing:-0.323px;-webkit-text-stroke:0;">HB2</div>
<div class="t" style="left:1133.80px;top:533.97px;font-size:11.5px;color:#3a3cd0;font-weight:bold;-webkit-text-stroke:0.25px;letter-spacing:-0.163px;-webkit-text-stroke:0;">HB3</div>
<div class="t" style="left:1167.40px;top:513.17px;font-size:11.5px;color:#3a3cd0;font-weight:bold;-webkit-text-stroke:0.25px;letter-spacing:-0.283px;-webkit-text-stroke:0;">HB3</div>
<div class="t" style="left:1036.20px;top:529.17px;font-size:11.5px;color:#3a3cd0;font-weight:bold;-webkit-text-stroke:0.25px;letter-spacing:0.025px;-webkit-text-stroke:0;">9180C</div>
<div class="t" style="left:1147.40px;top:695.38px;font-size:9px;color:#555;letter-spacing:-0.160px;">3030420</div>
<div class="t" style="left:1143.40px;top:707.38px;font-size:9px;color:#555;letter-spacing:-0.197px;">03-2009 11</div>
<div class="a" style="left:0px;top:714px;width:1280px;height:1px;background:#aca899"></div>
<div class="a" style="left:0px;top:715px;width:1280px;height:23px;background:linear-gradient(#f3f1e8,#ece9d8 30%,#ebe8d7)"></div>
<div class="a" style="left:804px;top:718px;width:1px;height:19px;background:#c8c4b0;box-shadow:1px 0 0 #fff"></div>
<div class="a" style="left:828px;top:718px;width:1px;height:19px;background:#c8c4b0;box-shadow:1px 0 0 #fff"></div>
<div class="a" style="left:852px;top:718px;width:1px;height:19px;background:#c8c4b0;box-shadow:1px 0 0 #fff"></div>
<div class="a" style="left:876px;top:718px;width:1px;height:19px;background:#c8c4b0;box-shadow:1px 0 0 #fff"></div>
<div class="a" style="left:900px;top:718px;width:1px;height:19px;background:#c8c4b0;box-shadow:1px 0 0 #fff"></div>
<div class="a" style="left:924px;top:718px;width:1px;height:19px;background:#c8c4b0;box-shadow:1px 0 0 #fff"></div>
<div class="a" style="left:948px;top:718px;width:1px;height:19px;background:#c8c4b0;box-shadow:1px 0 0 #fff"></div>
<div class="a" style="left:1180px;top:718px;width:1px;height:19px;background:#c8c4b0;box-shadow:1px 0 0 #fff"></div>
<svg style="left:928px;top:719px" width="18" height="17" viewBox="0 0 18 17"><rect x="0.5" y="0.5" width="14" height="12" fill="#fff" stroke="#7b8aa8"/><rect x="1" y="1" width="13" height="2" fill="#c8d2e8"/><circle cx="12" cy="12" r="4.5" fill="#f0b020" stroke="#b07010" stroke-width="0.8"/><rect x="11.3" y="9" width="1.6" height="3.5" fill="#5a2a00"/><rect x="11.3" y="13.5" width="1.6" height="1.5" fill="#5a2a00"/></svg>
<svg style="left:952px;top:719px" width="17" height="17" viewBox="0 0 17 17"><circle cx="8.5" cy="8.5" r="7.5" fill="#2f7ad8"/><path d="M4 4 Q7 3 8 6 Q6 9 4 8Z M9 10 Q12 9 13 12 Q11 15 9 14Z M10 3 Q13 4 14 7 L12 7Z" fill="#3cb043"/><circle cx="6" cy="5" r="3" fill="#fff" opacity="0.35"/></svg>
<div class="t" style="left:971.90px;top:722.19px;font-size:11px;color:#000;letter-spacing:0.293px;">Internet</div>
<svg style="left:1191px;top:720px" width="16" height="15" viewBox="0 0 16 15"><path d="M8 9 L12.5 13.5" stroke="#6a4a2a" stroke-width="2.2"/><circle cx="6" cy="6" r="5" fill="#dbe8fb" stroke="#4a6aa8" stroke-width="1.2"/><path d="M6 3 V9 M3 6 H9" stroke="#1c50b8" stroke-width="2"/></svg>
<div class="t" style="left:1206.40px;top:722.69px;font-size:11px;color:#000;letter-spacing:-0.038px;">100%</div>
<svg style="left:1249px;top:724px" width="8" height="5" viewBox="0 0 8 5"><path d="M0.5 0.5 H7.5 L4 4.5Z" fill="#000"/></svg>
<div class="a" style="left:1273px;top:729px;width:2px;height:2px;background:#c0bca8;box-shadow:1px 1px 0 #fff"></div>
<div class="a" style="left:1270px;top:732px;width:2px;height:2px;background:#c0bca8;box-shadow:1px 1px 0 #fff"></div>
<div class="a" style="left:1273px;top:732px;width:2px;height:2px;background:#c0bca8;box-shadow:1px 1px 0 #fff"></div>
<div class="a" style="left:1267px;top:735px;width:2px;height:2px;background:#c0bca8;box-shadow:1px 1px 0 #fff"></div>
<div class="a" style="left:1270px;top:735px;width:2px;height:2px;background:#c0bca8;box-shadow:1px 1px 0 #fff"></div>
<div class="a" style="left:1273px;top:735px;width:2px;height:2px;background:#c0bca8;box-shadow:1px 1px 0 #fff"></div>
<div class="a" style="left:0px;top:738px;width:95px;height:4px;background:linear-gradient(#3f9c48,#5ab35a,#2f8a38)"></div>
<div class="a" style="left:95px;top:738px;width:1057px;height:4px;background:linear-gradient(#3068d0,#4a88e8,#2a60c8)"></div>
<div class="a" style="left:1152px;top:738px;width:128px;height:4px;background:linear-gradient(#1280e8,#30a0ff,#1078e0)"></div>
</body></html>
